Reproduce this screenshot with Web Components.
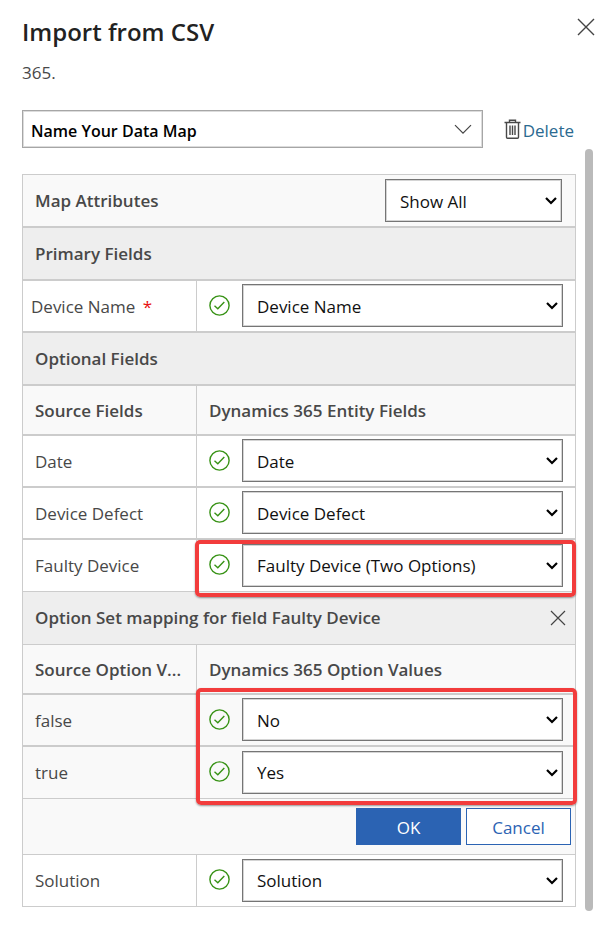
<!DOCTYPE html>
<html lang="en">
<head>
<meta charset="utf-8">
<meta name="viewport" content="width=device-width, initial-scale=1">
<title>Import from CSV</title>
<style>
  body {
    margin: 0;
    background: #fff;
    color: #484848;
    font: 17px/24px "Open Sans", "Noto Sans", sans-serif;
  }
</style>
</head>
<body>
<import-dialog heading="Import from CSV">
  <span slot="note">365.</span>
  <map-picker slot="picker"></map-picker>
  <map-table></map-table>
</import-dialog>

<template id="dialog-tpl">
  <style>
    :host { display: block; padding: 16px 4px 0 22px; }
    header { display: flex; justify-content: space-between; align-items: flex-start; margin-right: -2px; }
    h1 { margin: 0; color: #222; font-size: 24px; line-height: 32px; font-weight: 600; }
    button { border: 0; background: none; padding: 2px 0 0; margin: 0; width: 18px; height: 20px; color: #444; }
    button svg { display: block; }
    .note { margin: 13px 0 25px; }
    .body { display: flex; gap: 9px; margin-top: 1px; }
    .content { flex: 1; min-width: 0; padding: 25px 0 4px; }
    .thumb { width: 8px; border-radius: 4px; background: #bababa; }
  </style>
  <header>
    <h1></h1>
    <button type="button" aria-label="Close">
      <svg width="18" height="18" viewBox="0 0 18 18" fill="none" stroke="currentColor" stroke-width="1.4"><path d="M1 1l16 16M17 1L1 17"/></svg>
    </button>
  </header>
  <div class="note"><slot name="note"></slot></div>
  <slot name="picker"></slot>
  <div class="body">
    <div class="content"><slot></slot></div>
    <div class="thumb"></div>
  </div>
</template>

<template id="picker-tpl">
  <style>
    :host { display: flex; align-items: center; gap: 21px; padding-right: 19px; }
    .box { position: relative; flex: 1; height: 38px; }
    select {
      appearance: none; box-sizing: border-box; width: 100%; height: 100%;
      margin: 0; padding: 4px 36px 0 8px; border: 1px solid #a6a6a6; border-radius: 0;
      box-shadow: inset 0 0 0 1px #dcdcdc; background: #fff; color: #000;
      font: inherit; font-size: 16px; font-weight: 600;
    }
    .box svg { position: absolute; right: 11px; top: 14px; pointer-events: none; }
    a { display: flex; align-items: center; gap: 2px; color: #2b6a90; text-decoration: none; }
    a span { padding-top: 3px; }
  </style>
  <div class="box">
    <select aria-label="Data map"><option>Name Your Data Map</option></select>
    <svg width="18" height="11" viewBox="0 0 18 11" fill="none" stroke="#444" stroke-width="1.2"><path d="M1 1.2l8 8 8-8"/></svg>
  </div>
  <a href="#">
    <svg width="17" height="21" viewBox="0 0 17 21" fill="none" stroke="#484848" stroke-width="1.4"><path d="M.5 3.5h16M5.5 3.2V1.2h6v2M2.5 3.5v14.800q0 1 1 1h10q1 0 1-1V3.500M6 6.500v9.500M8.500 6.500v9.500M11 6.500v9.500"/></svg>
    <span>Delete</span>
  </a>
</template>

<template id="select-tpl">
  <style>
    :host { display: block; position: relative; height: 43px; }
    select {
      appearance: none; box-sizing: border-box; width: 100%; height: 100%;
      margin: 0; padding: 2px 28px 0 14px; border: 1px solid #757575; border-radius: 0;
      box-shadow: inset 0 0 0 1px #d4d4d4; background: #fff; color: #111; font: inherit;
    }
    svg { position: absolute; right: 5px; top: 18px; pointer-events: none; }
  </style>
  <select><option></option></select>
  <svg width="12" height="8" viewBox="0 0 12 8" fill="none" stroke="#000" stroke-width="2.2"><path d="M1 1l5 5 5-5"/></svg>
</template>

<template id="check-tpl">
  <style>:host { display: block; width: 21px; height: 21px; } svg { display: block; }</style>
  <svg width="21" height="21" viewBox="0 0 21 21" fill="none" stroke="#379215" stroke-width="1.4"><circle cx="10.500" cy="10.500" r="9.600"/><path d="M5.500 10.800l3.300 2.900L15.300 7"/></svg>
</template>

<template id="table-tpl">
  <style>
    :host { display: block; }
    table {
      width: 100%; table-layout: fixed; border-collapse: separate; border-spacing: 0;
      border: 1px solid #ccc; border-bottom: 0; box-sizing: border-box;
    }
    col.source { width: 174px; }
    th, td {
      box-sizing: border-box; height: 52px; padding: 1px 12px 0; text-align: left;
      font-weight: 400; border-bottom: 2px solid #ccc; white-space: nowrap; vertical-align: middle;
    }
    .thin > * { border-bottom-width: 1px; }
    .section th, .heads th { font-weight: 600; }
    .section th { height: 53px; padding-top: 0; background: #eee; }
    .section.light th { background: #f9f9f9; }
    .heads th { height: 50px; background: #f9f9f9; }
    .heads th:first-child, .field th { border-right: 1px solid #ccc; }
    .heads th:first-child { padding-right: 0; }
    .option > * { background: #f9f9f9; }
    .field th.required { padding-left: 8px; }
    .required span { color: #e81010; padding-left: 3px; }
    .field td { position: relative; padding: 0 12px 1px; }
    .pair, .bar { display: flex; align-items: center; justify-content: space-between; }
    .pair { gap: 12px; }
    .pair map-select { flex: 1; }
    ok-mark { padding-bottom: 1px; }
    .bar map-select { width: 177px; margin-right: 1px; font-weight: 400; }
    .bar button { border: 0; background: none; padding: 0; margin-right: -3px; width: 16px; height: 18px; color: #444; }
    .bar button svg { display: block; }
    .actions td { height: 56px; padding: 0 4px 0 0; background: #f9f9f9; }
    .buttons { display: flex; justify-content: flex-end; gap: 5px; }
    .buttons button {
      box-sizing: border-box; width: 105px; height: 37px; border: 1px solid #2b63b3; border-radius: 0;
      background: #fff; color: #2b63b3; font: inherit; padding: 2px 0 0;
    }
    .buttons .primary { background: #2b63b3; color: #fff; }
    .callout {
      position: absolute; z-index: 1; inset: 0 -1px -6px -2px; box-sizing: border-box;
      border: 4px solid #f23c3c; border-radius: 5px; pointer-events: none;
      box-shadow: 0 1px 2px #0006;
    }
    .callout.two { inset: -7px -2px calc(-100% - 10px) -1px; }
  </style>
  <table aria-label="Map Attributes">
    <colgroup><col class="source"><col></colgroup>
    <tbody>
      <tr class="section light"><th colspan="2"><div class="bar">Map Attributes<map-select value="Show All" label="Show"></map-select></div></th></tr>
      <tr class="section"><th colspan="2">Primary Fields</th></tr>
      <tr class="field"><th scope="row" class="required">Device Name <span>*</span></th><td><div class="pair"><ok-mark></ok-mark><map-select value="Device Name"></map-select></div></td></tr>
      <tr class="section"><th colspan="2">Optional Fields</th></tr>
      <tr class="heads"><th scope="col">Source Fields</th><th scope="col">Dynamics 365 Entity Fields</th></tr>
      <tr class="field"><th scope="row">Date</th><td><div class="pair"><ok-mark></ok-mark><map-select value="Date"></map-select></div></td></tr>
      <tr class="field"><th scope="row">Device Defect</th><td><div class="pair"><ok-mark></ok-mark><map-select value="Device Defect"></map-select></div></td></tr>
      <tr class="field thin"><th scope="row">Faulty Device</th><td><div class="pair"><ok-mark></ok-mark><map-select value="Faulty Device (Two Options)" label="Faulty Device"></map-select></div><div class="callout"></div></td></tr>
      <tr class="section thin"><th colspan="2"><div class="bar">Option Set mapping for field Faulty Device<button type="button" aria-label="Close option set mapping"><svg width="16" height="16" viewBox="0 0 16 16" fill="none" stroke="currentColor" stroke-width="1.2"><path d="M1 1l14 14M15 1L1 15"/></svg></button></div></th></tr>
      <tr class="heads"><th scope="col">Source Option V...</th><th scope="col">Dynamics 365 Option Values</th></tr>
      <tr class="field option"><th scope="row">false</th><td><div class="pair"><ok-mark></ok-mark><map-select value="No" label="false"></map-select></div><div class="callout two"></div></td></tr>
      <tr class="field option thin"><th scope="row">true</th><td><div class="pair"><ok-mark></ok-mark><map-select value="Yes" label="true"></map-select></div></td></tr>
      <tr class="actions thin"><td colspan="2"><div class="buttons"><button type="button" class="primary">OK</button><button type="button">Cancel</button></div></td></tr>
      <tr class="field thin"><th scope="row">Solution</th><td><div class="pair"><ok-mark></ok-mark><map-select value="Solution"></map-select></div></td></tr>
    </tbody>
  </table>
</template>

<script>
  class TemplateElement extends HTMLElement {
    constructor() {
      super();
      this.attachShadow({ mode: "open" })
        .append(document.getElementById(this.constructor.template).content.cloneNode(true));
    }
  }
  customElements.define("ok-mark", class extends TemplateElement {
    static template = "check-tpl";
    connectedCallback() {
      this.setAttribute("role", "img");
      this.setAttribute("aria-label", "Mapped");
    }
  });
  customElements.define("map-select", class extends TemplateElement {
    static template = "select-tpl";
    connectedCallback() {
      const value = this.getAttribute("value");
      this.shadowRoot.querySelector("option").textContent = value;
      this.shadowRoot.querySelector("select").setAttribute("aria-label", this.getAttribute("label") || value);
    }
  });
  customElements.define("map-picker", class extends TemplateElement {
    static template = "picker-tpl";
  });
  customElements.define("map-table", class extends TemplateElement {
    static template = "table-tpl";
  });
  customElements.define("import-dialog", class extends TemplateElement {
    static template = "dialog-tpl";
    connectedCallback() {
      this.shadowRoot.querySelector("h1").textContent = this.getAttribute("heading");
    }
  });
</script>
</body>
</html>
